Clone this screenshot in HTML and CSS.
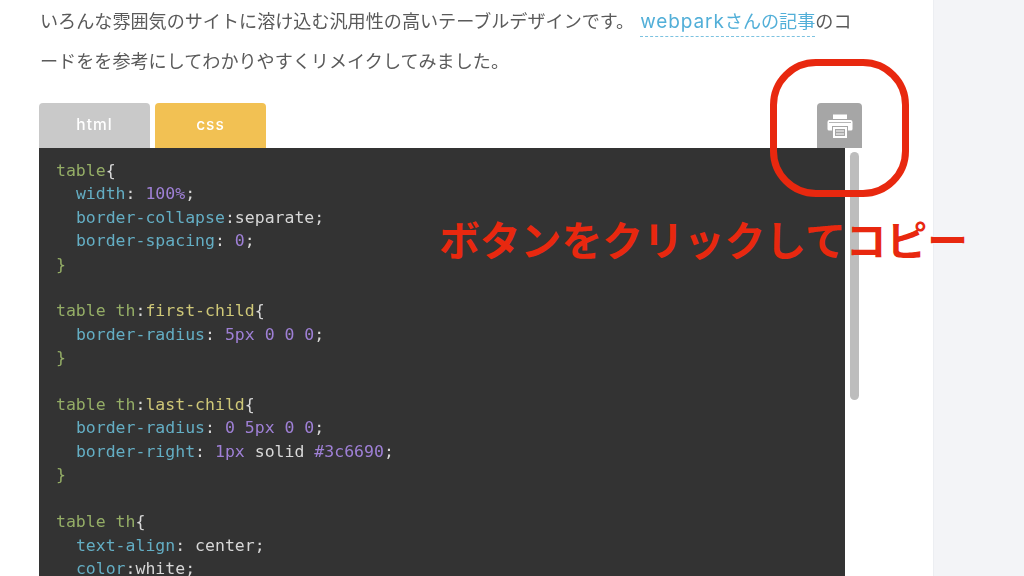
FILE: index.html
```html
<!DOCTYPE html>
<html lang="ja">
<head>
<meta charset="utf-8">
<title>テーブルデザイン</title>
<link rel="stylesheet" href="styles.css">
</head>
<body>
<div class="page">
  <main class="content">
    <p class="intro">いろんな雰囲気のサイトに溶け込む汎用性の高いテーブルデザインです。<a class="link" href="#"><span class="latin">webpark</span>さんの記事</a>のコ<br>ードをを参考にしてわかりやすくリメイクしてみました。</p>
    <section class="code-box">
      <div class="tabs">
        <div class="tab tab-html">html</div>
        <div class="tab tab-css">css</div>
        <div class="tab-copy">
          <svg class="print-icon" viewBox="0 0 26 24" width="26" height="24" aria-hidden="true">
            <rect x="6" y="0.500" width="14" height="4.500" fill="#fff"/>
            <path fill="#fff" d="M2.500 6h21a2 2 0 0 1 2 2v7a1.500 1.500 0 0 1-1.500 1.500h-3V12H5v4.500H2A1.500 1.500 0 0 1 .5 15V8a2 2 0 0 1 2-2z"/>
            <rect x="2" y="8" width="22" height="0.800" fill="#a6a6a6"/>
            <path fill="none" stroke="#fff" stroke-width="2" d="M7 14h12v9H7z"/>
            <path fill="none" stroke="#fff" stroke-width="1" d="M9 17h8M9 20h8"/>
          </svg>
        </div>
      </div>
      <div class="code-body">
<pre class="code"><span class="sel">table</span><span class="pl">{</span>
  <span class="prop">width</span><span class="pl">:</span> <span class="num">100%</span><span class="pl">;</span>
  <span class="prop">border-collapse</span><span class="pl">:separate;</span>
  <span class="prop">border-spacing</span><span class="pl">:</span> <span class="num">0</span><span class="pl">;</span>
<span class="sel">}</span>

<span class="sel">table th</span><span class="pl">:</span><span class="pseudo">first-child</span><span class="pl">{</span>
  <span class="prop">border-radius</span><span class="pl">:</span> <span class="num">5px 0 0 0</span><span class="pl">;</span>
<span class="sel">}</span>

<span class="sel">table th</span><span class="pl">:</span><span class="pseudo">last-child</span><span class="pl">{</span>
  <span class="prop">border-radius</span><span class="pl">:</span> <span class="num">0 5px 0 0</span><span class="pl">;</span>
  <span class="prop">border-right</span><span class="pl">:</span> <span class="num">1px</span> <span class="pl">solid</span> <span class="num">#3c6690</span><span class="pl">;</span>
<span class="sel">}</span>

<span class="sel">table th</span><span class="pl">{</span>
  <span class="prop">text-align</span><span class="pl">:</span> <span class="pl">center;</span>
  <span class="prop">color</span><span class="pl">:white;</span>
</pre>
        <div class="scrollbar"><div class="thumb"></div></div>
      </div>
    </section>
  </main>
  <aside class="side"></aside>
</div>
<div class="ring"></div>
<div class="note">ボタンをクリックしてコピー</div>
</body>
</html>
```
FILE: styles.css
```css
* { box-sizing: border-box; }
html, body { margin: 0; height: 576px; overflow: hidden; background: #fff; }
.page { display: flex; height: 576px; overflow: hidden; filter: blur(.35px); }
.content { width: 933px; padding: 1px 71px 0 39px; background: #fff; flex: none; }
.side { flex: 1; background: #f3f4f7; border-left: 1px solid #eceef2; }
.intro {
  margin: 0;
  padding-left: 1px;
  height: 80px;
  font-family: "Inter", "Noto Sans CJK JP", sans-serif;
  font-size: 18.100px;
  line-height: 40px;
  color: #5a5a5a;
  white-space: nowrap;
}
.link {
  margin-left: 6px;
  color: #52afd8;
  text-decoration: none;
  border-bottom: 1px dashed #7cc2e0;
  padding-bottom: 4px;
}
.latin { font-size: 19px; line-height: 1; letter-spacing: .900px; }
.code-box { margin-top: 22px; }
.tabs { display: flex; height: 45px; }
.tab {
  width: 111px;
  margin-right: 5px;
  border-radius: 4px 4px 0 0;
  color: #fff;
  font-family: "Inter", "Noto Sans", sans-serif;
  font-weight: 500;
  font-size: 15.500px;
  line-height: 44px;
  text-align: center;
  letter-spacing: 1px;
}
.tab-html { background: #c9c9c9; }
.tab-css { background: #f2c153; }
.tab-copy {
  width: 45px;
  margin-left: auto;
  border-radius: 4px 4px 0 0;
  background: #a6a6a6;
  display: flex;
  align-items: center;
  justify-content: center;
}
.code-body { display: flex; height: 428px; }
.code {
  margin: 0;
  width: 806px;
  flex: none;
  padding: 11px 17px;
  background: #333;
  color: #ddd;
  font-family: "DejaVu Sans Mono", monospace;
  font-size: 16.500px;
  line-height: 23.400px;
  overflow: hidden;
}
.sel { color: #94ad66; }
.pseudo { color: #cfc878; }
.prop { color: #64aec4; }
.num { color: #9f80d6; }
.pl { color: #d8d8d8; }
.scrollbar { flex: 1; padding: 4px 3px 0 5px; background: #fff; }
.thumb { width: 9px; height: 248px; border-radius: 5px; background: #bdbdbd; }
.ring {
  position: absolute;
  left: 770px;
  top: 59px;
  width: 139px;
  height: 138px;
  border: 7px solid #e8280f;
  border-radius: 46px;
}
.note {
  position: absolute;
  left: 439px;
  top: 214px;
  font-family: "Noto Sans CJK JP", sans-serif;
  font-weight: 700;
  font-size: 40.800px;
  line-height: 50px;
  color: #e8280f;
  white-space: nowrap;
}
```
